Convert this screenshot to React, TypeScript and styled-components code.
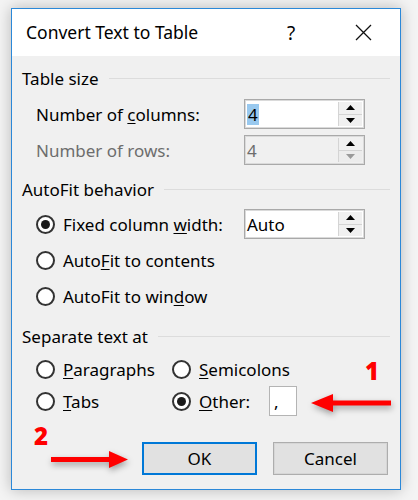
import React from "react";
import styled, { createGlobalStyle } from "styled-components";

const Global = createGlobalStyle`
  html, body { margin: 0; padding: 0; background: #f4f4f4; }
  body { font-family: "Noto Sans", "Open Sans", sans-serif; color: #000; }
`;

const Page = styled.div`
  position: relative;
  width: 418px;
  height: 500px;
  box-sizing: border-box;
  padding: 8px 0 0 11px;
  background: #f4f4f4;
  overflow: hidden;
`;

const Window = styled.div`
  width: 390px;
  height: 482px;
  box-sizing: border-box;
  border: 1px solid #2b88d8;
  box-shadow: 0 0 14px rgba(0, 0, 0, 0.25);
  display: flex;
  flex-direction: column;
  background: #f0f0f0;
`;

const TitleBar = styled.div`
  height: 47px;
  flex: none;
  background: #fff;
  display: flex;
  align-items: center;
  padding: 0 14px 0 14px;
  gap: 26px;
`;

const Title = styled.div`
  font-size: 17.5px;
  flex: 1;
  padding-bottom: 1px;
`;

const TitleButton = styled.div`
  width: 46px;
  height: 30px;
  display: flex;
  align-items: center;
  justify-content: center;
  font-size: 19px;
`;

const Body = styled.div`
  flex: 1;
  display: flex;
  flex-direction: column;
  padding: 12px 10px 14px 10px;
`;

const Heading = styled.div<{ $mt?: number }>`
  display: flex;
  align-items: center;
  gap: 10px;
  height: 20px;
  font-size: 17px;
  margin-top: ${(p) => p.$mt ?? 0}px;
  &::after {
    content: "";
    flex: 1;
    height: 1px;
    background: #dcdcdc;
  }
`;

const Indent = styled.div<{ $mt: number; $gap: number }>`
  padding-left: 14px;
  margin-top: ${(p) => p.$mt}px;
  display: flex;
  flex-direction: column;
  gap: ${(p) => p.$gap}px;
`;

const FieldRow = styled.div`
  display: grid;
  grid-template-columns: 208px 121px;
  align-items: center;
  height: 30px;
`;

const Label = styled.span<{ $disabled?: boolean }>`
  font-size: 17px;
  color: ${(p) => (p.$disabled ? "#6d6d6d" : "#000")};
  white-space: nowrap;
`;

const Spin = styled.div<{ $disabled?: boolean }>`
  width: 121px;
  height: 30px;
  box-sizing: border-box;
  border: 1px solid #a9a9a9;
  box-shadow: inset 0 0 0 1px #dadada;
  background: ${(p) => (p.$disabled ? "#f0f0f0" : "#fff")};
  display: flex;
  align-items: stretch;
`;

const SpinValue = styled.div<{ $disabled?: boolean }>`
  flex: 1;
  display: flex;
  align-items: center;
  padding-left: 2px;
  font-size: 17px;
  color: ${(p) => (p.$disabled ? "#6d6d6d" : "#000")};
`;

const Selected = styled.span`
  background: #99c9ef;
  padding: 0 1px;
  line-height: 21px;
`;

const SpinButtons = styled.div`
  width: 23px;
  margin: 2px 2px 2px 0;
  display: flex;
  flex-direction: column;
  border-left: 1px solid #d4d4d4;
`;

const SpinHalf = styled.div<{ $dim?: boolean; $top?: boolean }>`
  flex: 1;
  display: flex;
  align-items: center;
  justify-content: center;
  background: ${(p) => (p.$dim ? "#ececec" : "#f0f0f0")};
  border-bottom: ${(p) => (p.$top ? "1px solid #d4d4d4" : "none")};
  svg {
    display: block;
  }
`;

const RadioRow = styled.div<{ $h?: number }>`
  display: flex;
  align-items: center;
  gap: 8px;
  height: ${(p) => p.$h ?? 30}px;
`;

const RadioCircle = styled.span<{ $checked?: boolean }>`
  width: 19px;
  height: 19px;
  box-sizing: border-box;
  border-radius: 50%;
  border: 2px solid #333;
  background: #fff;
  display: flex;
  align-items: center;
  justify-content: center;
  flex: none;
  &::after {
    content: "";
    width: 9px;
    height: 9px;
    border-radius: 50%;
    background: ${(p) => (p.$checked ? "#1a1a1a" : "transparent")};
  }
`;

const FixedRow = styled.div`
  display: grid;
  grid-template-columns: 208px 121px;
  align-items: center;
  height: 30px;
`;

const SepGrid = styled.div`
  display: grid;
  grid-template-columns: 136px auto;
  grid-auto-rows: 30px;
  row-gap: 2px;
  align-items: center;
`;

const SmallInput = styled.div`
  width: 28px;
  height: 30px;
  box-sizing: border-box;
  border: 1px solid #b4b4b4;
  background: #fff;
  margin-left: 11px;
  padding-left: 4px;
  font-size: 17px;
  display: flex;
  align-items: center;
`;

const Buttons = styled.div`
  display: flex;
  justify-content: flex-end;
  gap: 16px;
  margin-top: 26px;
  padding-right: 2px;
`;

const Button = styled.div<{ $default?: boolean }>`
  width: 115px;
  height: 33px;
  box-sizing: border-box;
  background: #e1e1e1;
  border: ${(p) => (p.$default ? "2px solid #0078d7" : "1px solid #adadad")};
  box-shadow: ${(p) => (p.$default ? "none" : "inset 0 0 0 1px #d6d6d6")};
  display: flex;
  align-items: center;
  justify-content: center;
  font-size: 17px;
`;

const Marker = styled.div<{ $x: number; $y: number }>`
  position: absolute;
  left: ${(p) => p.$x}px;
  top: ${(p) => p.$y}px;
  font-family: "Open Sans", "Liberation Sans", sans-serif;
  font-weight: 800;
  font-size: 24px;
  line-height: 1;
  color: #ff0000;
`;

const ArrowSvg = styled.svg<{ $x: number; $y: number }>`
  position: absolute;
  left: ${(p) => p.$x}px;
  top: ${(p) => p.$y}px;
  overflow: visible;
  filter: drop-shadow(1px 3px 3px rgba(0, 0, 0, 0.35));
`;

const U = styled.u`
  text-decoration-thickness: 1px;
  text-underline-offset: 2px;
`;

const Up = ({ dim }: { dim?: boolean }) => (
  <svg width="9" height="5" viewBox="0 0 9 5">
    <path d="M0 5 L4.5 0 L9 5 Z" fill={dim ? "#9a9a9a" : "#000"} />
  </svg>
);
const Down = ({ dim }: { dim?: boolean }) => (
  <svg width="9" height="5" viewBox="0 0 9 5">
    <path d="M0 0 L9 0 L4.5 5 Z" fill={dim ? "#9a9a9a" : "#000"} />
  </svg>
);

const SpinBox = ({
  children,
  disabled,
}: {
  children: React.ReactNode;
  disabled?: boolean;
}) => (
  <Spin $disabled={disabled}>
    <SpinValue $disabled={disabled}>{children}</SpinValue>
    <SpinButtons>
      <SpinHalf $top>
        <Up />
      </SpinHalf>
      <SpinHalf $dim={disabled}>
        <Down dim={disabled} />
      </SpinHalf>
    </SpinButtons>
  </Spin>
);

const Radio = ({
  checked,
  children,
}: {
  checked?: boolean;
  children: React.ReactNode;
}) => (
  <RadioRow>
    <RadioCircle $checked={checked} />
    <Label>{children}</Label>
  </RadioRow>
);

export default function App() {
  return (
    <Page>
      <Global />
      <Window>
        <TitleBar>
          <Title>Convert Text to Table</Title>
          <TitleButton>?</TitleButton>
          <TitleButton>
            <svg width="17" height="17" viewBox="0 0 17 17">
              <path d="M1 1 L16 16 M16 1 L1 16" stroke="#111" strokeWidth="1.3" />
            </svg>
          </TitleButton>
        </TitleBar>
        <Body>
          <Heading>Table size</Heading>
          <Indent $mt={11} $gap={6}>
            <FieldRow>
              <Label>
                Number of <U>c</U>olumns:
              </Label>
              <SpinBox>
                <Selected>4</Selected>
              </SpinBox>
            </FieldRow>
            <FieldRow>
              <Label $disabled>Number of rows:</Label>
              <SpinBox disabled>4</SpinBox>
            </FieldRow>
          </Indent>

          <Heading $mt={14}>AutoFit behavior</Heading>
          <Indent $mt={10} $gap={6}>
            <FixedRow>
              <Radio checked>
                Fixed column <U>w</U>idth:
              </Radio>
              <SpinBox>Auto</SpinBox>
            </FixedRow>
            <Radio>
              Auto<U>F</U>it to contents
            </Radio>
            <Radio>
              AutoFit to win<U>d</U>ow
            </Radio>
          </Indent>

          <Heading $mt={15}>Separate text at</Heading>
          <Indent $mt={8} $gap={0}>
            <SepGrid>
              <Radio>
                <U>P</U>aragraphs
              </Radio>
              <Radio>
                <U>S</U>emicolons
              </Radio>
              <Radio>
                <U>T</U>abs
              </Radio>
              <RadioRow>
                <RadioCircle $checked />
                <Label>
                  <U>O</U>ther:
                </Label>
                <SmallInput>,</SmallInput>
              </RadioRow>
            </SepGrid>
          </Indent>

          <Buttons>
            <Button $default>OK</Button>
            <Button>Cancel</Button>
          </Buttons>
        </Body>
      </Window>

      <Marker $x={365} $y={359}>1</Marker>
      <ArrowSvg $x={310} $y={393} width="82" height="20" viewBox="0 0 82 20">
        <path d="M1 10 L23 1 L23 7.5 L81 7.5 L81 12.5 L23 12.5 L23 19 Z" fill="#ff0000" />
      </ArrowSvg>

      <Marker $x={34} $y={424}>2</Marker>
      <ArrowSvg $x={51} $y={450} width="78" height="19" viewBox="0 0 78 19">
        <path d="M77 9.5 L58 1 L58 7 L0 7 L0 12 L58 12 L58 18 Z" fill="#ff0000" />
      </ArrowSvg>
    </Page>
  );
}
